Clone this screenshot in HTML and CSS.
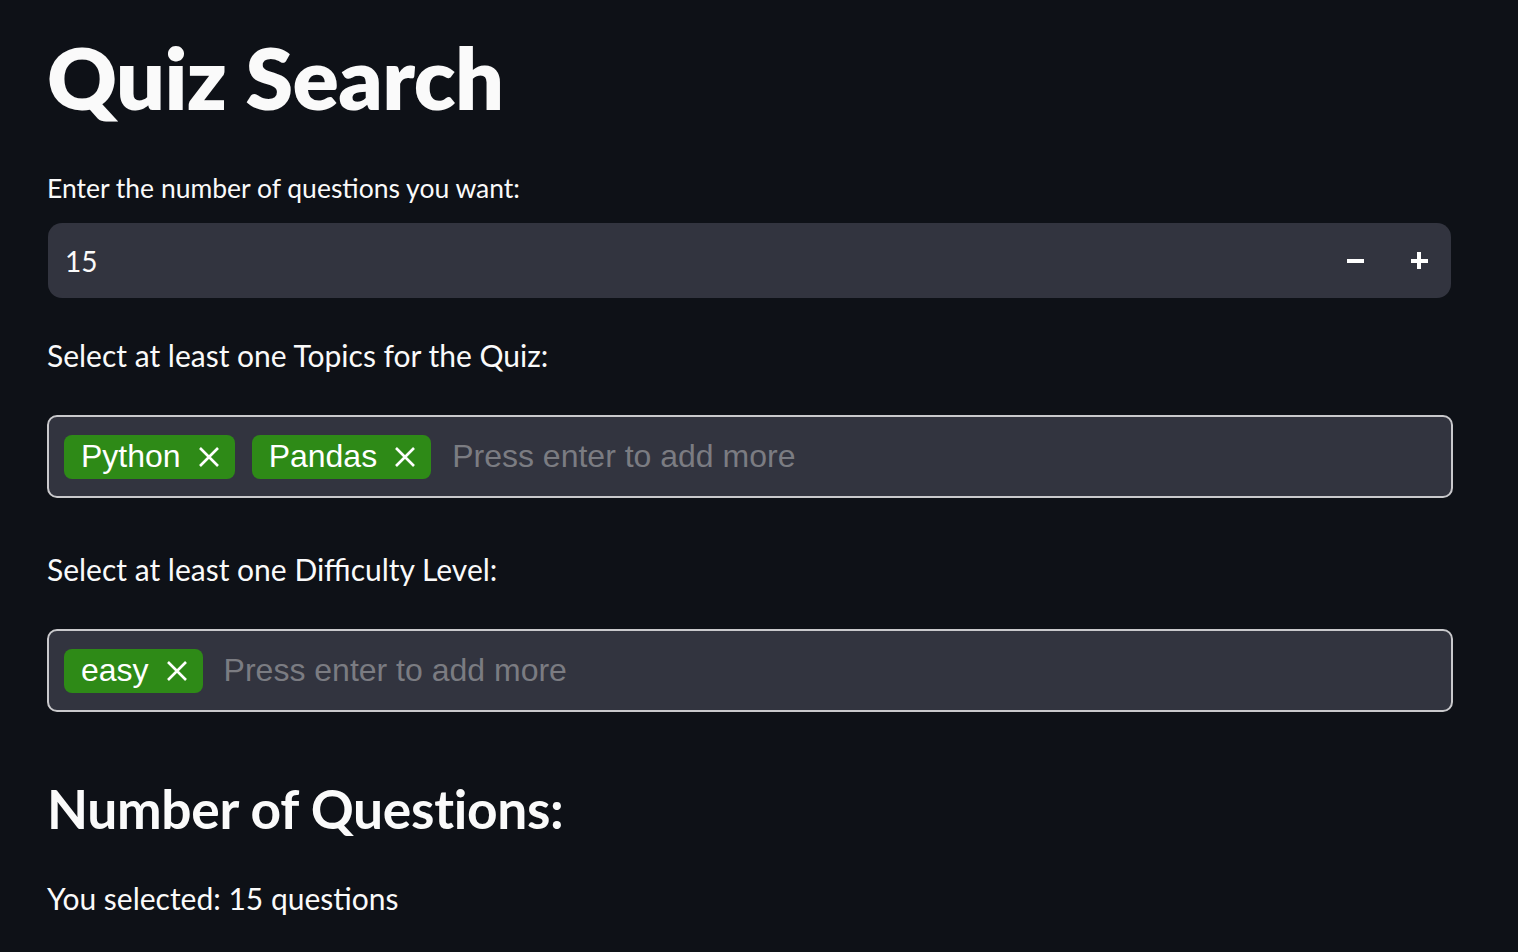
FILE: index.html
```html
<!DOCTYPE html>
<html lang="en">
<head>
<meta charset="utf-8">
<title>Quiz Search</title>
<link rel="stylesheet" href="styles.css">
</head>
<body>
<main class="main">
  <h1 class="title">Quiz Search</h1>

  <label class="label">Enter the number of questions you want:</label>
  <div class="number-input">
    <span class="number-value">15</span>
    <div class="steppers">
      <button class="step" aria-label="decrement"><span class="minus"></span></button>
      <button class="step" aria-label="increment"><span class="plus"></span></button>
    </div>
  </div>

  <p class="text text-topics">Select at least one Topics for the Quiz:</p>
  <div class="multiselect">
    <span class="tag">Python<svg class="x" viewBox="0 0 22 22"><path d="M2 2L20 20M20 2L2 20"/></svg></span>
    <span class="tag">Pandas<svg class="x" viewBox="0 0 22 22"><path d="M2 2L20 20M20 2L2 20"/></svg></span>
    <span class="placeholder">Press enter to add more</span>
  </div>

  <p class="text text-level">Select at least one Difficulty Level:</p>
  <div class="multiselect">
    <span class="tag">easy<svg class="x" viewBox="0 0 22 22"><path d="M2 2L20 20M20 2L2 20"/></svg></span>
    <span class="placeholder">Press enter to add more</span>
  </div>

  <h2 class="subtitle">Number of Questions:</h2>
  <p class="text text-result">You selected: 15 questions</p>
</main>
</body>
</html>
```

FILE: styles.css
```css
html, body {
  margin: 0;
  padding: 0;
  background: #0e1117;
}

body {
  color: #fafafa;
  font-family: Lato, "Noto Sans", sans-serif;
}

.main {
  width: 1406px;
  padding: 0 0 0 47px;
  display: flex;
  flex-direction: column;
}

.title {
  margin: 22px 0 0 0;
  font-size: 86px;
  font-weight: 800;
  line-height: 110px;
  letter-spacing: -0.6px;
}

.label {
  display: block;
  margin-top: 39px;
  font-size: 26.5px;
  line-height: 34px;
  font-weight: 400;
}

.number-input {
  margin-top: 18px;
  margin-left: 1px;
  width: 1403px;
  height: 75px;
  background: #32343f;
  border-radius: 14px;
  display: flex;
  align-items: center;
  justify-content: space-between;
}

.number-value {
  padding-left: 17px;
  font-size: 28px;
}

.steppers {
  display: flex;
  height: 100%;
}

.step {
  width: 64px;
  height: 100%;
  background: transparent;
  border: none;
  padding: 0;
  display: flex;
  align-items: center;
  justify-content: center;
}

.minus, .plus {
  display: block;
  width: 17px;
  height: 4px;
  background: #ffffff;
}

.plus {
  position: relative;
}

.plus::after {
  content: "";
  position: absolute;
  left: 6.5px;
  top: -6.5px;
  width: 4px;
  height: 17px;
  background: #ffffff;
}

.text {
  margin: 0;
  font-size: 30px;
  line-height: 40px;
}

.text-topics {
  margin-top: 37px;
}

.text-level {
  margin-top: 51px;
}

.text-result {
  margin-top: 35px;
}

.multiselect {
  margin-top: 40px;
  height: 83px;
  box-sizing: border-box;
  border: 2px solid #c9c9cc;
  border-radius: 10px;
  background: #32343f;
  display: flex;
  align-items: center;
  gap: 17px;
  padding-left: 15px;
  font-family: "Liberation Sans", Arial, sans-serif;
  font-size: 32px;
}

.tag {
  height: 44px;
  box-sizing: border-box;
  background: #2e8a17;
  color: #ffffff;
  border-radius: 8px;
  display: inline-flex;
  align-items: center;
  padding: 0 15px 0 17px;
  gap: 17px;
}

.x {
  width: 22px;
  height: 22px;
  fill: none;
  stroke: #ffffff;
  stroke-width: 2.6;
}

.placeholder {
  color: #7b7c82;
  margin-left: 4px;
}

.subtitle {
  margin: 61px 0 0 0;
  font-size: 53.3px;
  line-height: 70px;
  font-weight: 700;
  letter-spacing: -0.3px;
}
```
